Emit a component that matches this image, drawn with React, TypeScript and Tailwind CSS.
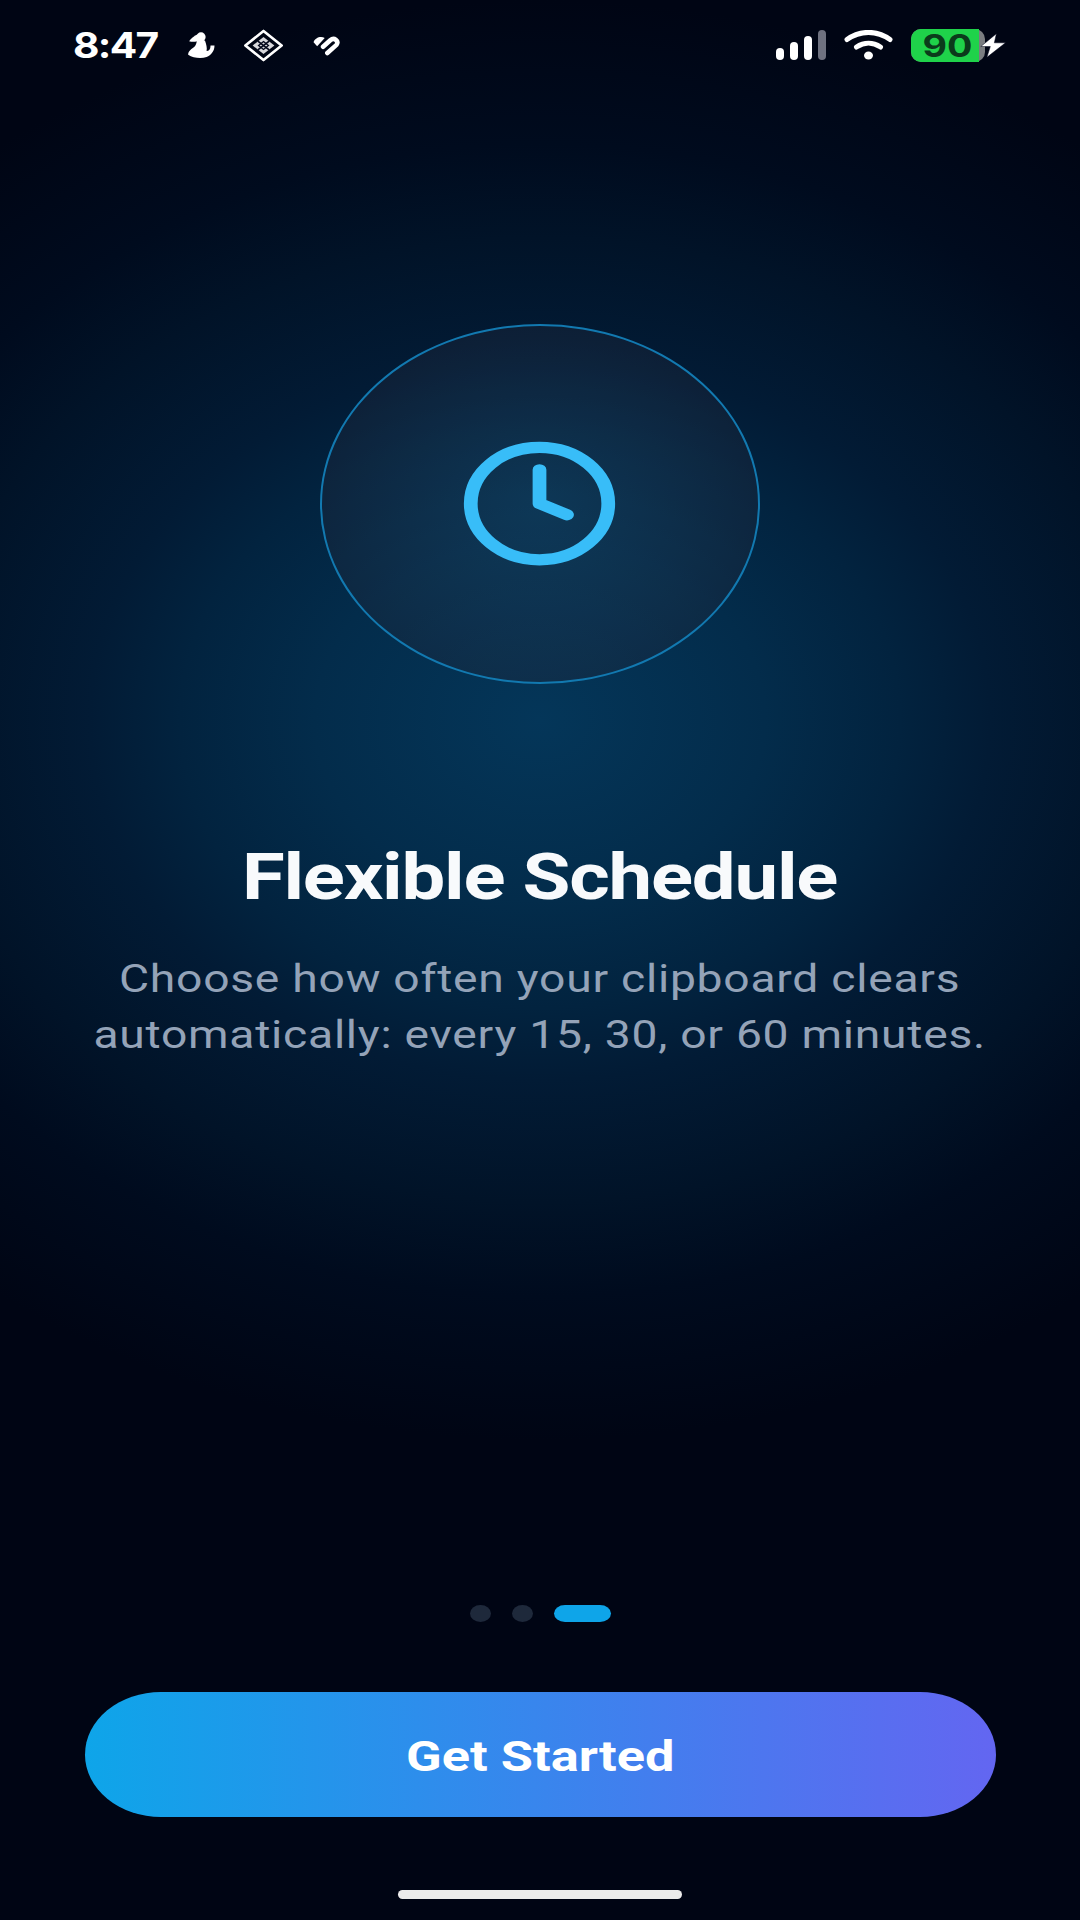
import { Clock } from "lucide-react";

// the whole screen is wider than it is tall by the same factor, so text gets scale-x-[1.217]
function PersonIcon() {
  return (
    <svg viewBox="20 22 84 82" className="h-[27px] w-[28px]" fill="white">
      <circle cx="62" cy="37" r="14" />
      <path d="M52 29 C42 34 32 41 26 50 C38 54 50 51 58 46 Z" />
      <path d="M50 48 L74 48 C78 60 81 70 79 80 C86 80 91 74 91 63 L103 63 C103 80 93 92 79 98 C62 103 38 101 23 91 C23 80 35 72 42 67 C47 62 48 55 50 48 Z" />
    </svg>
  );
}

function DiamondIcon() {
  return (
    <svg viewBox="188 12 122 100" className="h-[33px] w-[41px]" fill="none">
      <path d="M249 18 L304 62 L249 106 L194 62 Z" stroke="white" strokeWidth="8" strokeLinejoin="round" />
      <path d="M249 36 L282 62 L249 88 L216 62 Z" fill="#d8d8dc" />
      <path d="M232 49 L266 75 M266 49 L232 75" stroke="#04081c" strokeWidth="5" />
      <path d="M249 50 L264 62 L249 74 L234 62 Z" stroke="#04081c" strokeWidth="4" />
    </svg>
  );
}

function HeartIcon() {
  return (
    <svg viewBox="390 30 90 64" className="h-[21px] w-[30px]" fill="none">
      <path d="M394 52 C398 38 416 32 428 39 L405 64 Z" fill="white" />
      <path d="M423 66 L445 46 C457 36 472 48 464 60 L436 85" stroke="white" strokeWidth="14" strokeLinecap="round" />
    </svg>
  );
}

function SignalBars() {
  return (
    <div className="flex h-[30px] items-end gap-[6px]">
      <div className="h-[12px] w-[8px] rounded-full bg-white" />
      <div className="h-[18px] w-[8px] rounded-full bg-white" />
      <div className="h-[24px] w-[8px] rounded-full bg-white" />
      <div className="h-[30px] w-[8px] rounded-[4px] bg-[#6f7280]" />
    </div>
  );
}

function WifiIcon() {
  return (
    <svg viewBox="0 0 49 30" className="h-[30px] w-[49px]" fill="none" stroke="white" strokeLinecap="round">
      <path d="M3 9.5 C16 0 33 0 46 9.5" strokeWidth="5" />
      <path d="M12.5 17 C20 12 29 12 36.5 17" strokeWidth="5" />
      <ellipse cx="24.5" cy="25.5" rx="4.5" ry="4" fill="white" stroke="none" />
    </svg>
  );
}

function Battery() {
  return (
    <div className="flex items-center">
      <div className="flex h-[33px] w-[74px] rounded-[10px] bg-[#7a7d80]">
        <div className="flex w-[68px] items-center justify-center rounded-l-[10px] bg-[#1fd24a] pl-[6px]">
          <span className="scale-x-[1.217] font-['Inter',sans-serif] text-[31px] leading-none font-bold text-[#0b3b1b]">90</span>
        </div>
      </div>
      <svg viewBox="720 96 76 74" className="-ml-[5px] h-[25px] w-[26px]" fill="white" stroke="#04081c" strokeWidth="1.5">
        <path d="M768 98 L722 136 H750 L740 168 L795 125 H762 Z" />
      </svg>
    </div>
  );
}

export default function App() {
  return (
    <div className="flex h-[1920px] w-[1080px] flex-col items-center overflow-hidden bg-[#000514] bg-[radial-gradient(ellipse_900px_720px_at_50%_720px,#043659_0%,#032c4b_25%,#02233f_40%,#021b35_50%,#011328_67%,#000b1e_80%,#000514_100%)] font-['Roboto',sans-serif]">
      <div className="flex h-[90px] w-full items-center pr-[74px] pl-[73px]">
        <span className="w-[84px] origin-left scale-x-[1.13] font-['Inter',sans-serif] text-[36px] leading-none font-bold tracking-[-1.5px] text-white">8:47</span>
        <div className="ml-[30px] flex items-center gap-[28px]">
          <PersonIcon />
          <DiamondIcon />
          <HeartIcon />
        </div>
        <div className="ml-auto flex items-center gap-[18px]">
          <SignalBars />
          <WifiIcon />
          <Battery />
        </div>
      </div>

      <div className="mt-[234px] flex h-[360px] w-[440px] shrink-0 items-center justify-center rounded-[50%] border-2 border-[#1279b0] bg-[#1e293b]/40 bg-[radial-gradient(closest-side,rgba(14,165,233,0.12),transparent)]">
        <Clock preserveAspectRatio="none" className="h-[135px] w-[165px] -translate-x-px -translate-y-px text-[#38bdf8]" />
      </div>

      <h1 className="mt-[158px] scale-x-[1.217] text-[64px] leading-[72px] font-bold tracking-[-1px] text-[#f8fafc]">Flexible Schedule</h1>
      <p className="mt-[37px] scale-x-[1.217] text-center text-[38px] leading-[56px] tracking-[0.6px] text-[#94a3b8]">
        Choose how often your clipboard clears
        <br />
        automatically: every 15, 30, or 60 minutes.
      </p>

      <div className="mt-auto flex items-center gap-[21px]">
        <div className="h-[17px] w-[21px] rounded-[50%] bg-[#1e293b]" />
        <div className="h-[17px] w-[21px] rounded-[50%] bg-[#1e293b]" />
        <div className="h-[17px] w-[57px] rounded-[11px/8.5px] bg-[#0ea5e9]" />
      </div>

      <button className="mt-[70px] flex h-[125px] w-[911px] items-center justify-center rounded-[76px/62.5px] bg-[linear-gradient(90deg,#0ea5e9,#6366f1)] pt-[3px]">
        <span className="scale-x-[1.217] text-[43px] font-bold text-white">Get Started</span>
      </button>

      <div className="mt-[73px] mb-[21px] h-[9px] w-[284px] rounded-full bg-[#ececec]" />
    </div>
  );
}
